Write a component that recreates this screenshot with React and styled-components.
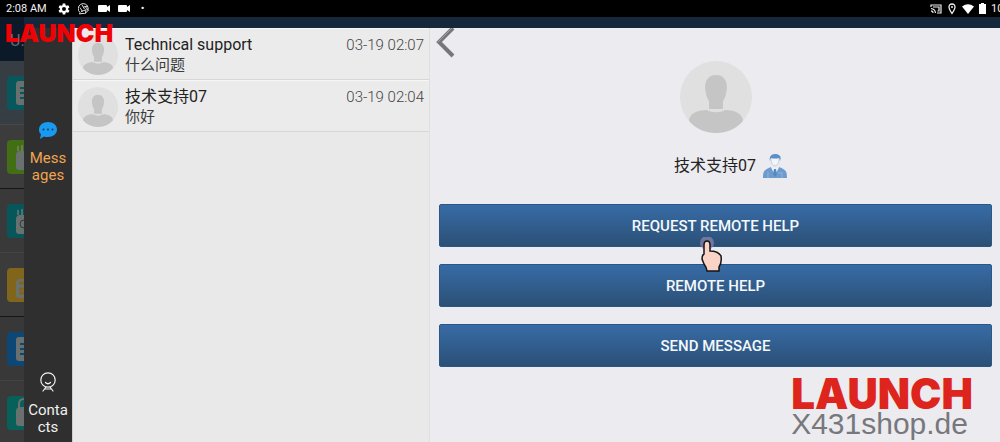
import React from "react";
import styled, { createGlobalStyle } from "styled-components";

const GlobalStyle = createGlobalStyle`
  * {
    box-sizing: border-box;
  }

  body {
    margin: 0;
    background-color: #000;
    font-family: Roboto, "Noto Sans CJK SC", sans-serif;
  }

  button {
    font-family: inherit;
    cursor: pointer;
  }
`;

const Screen = styled.div`
  position: relative;
  display: flex;
  flex-direction: column;
  height: 100vh;
  overflow: hidden;
`;

const StatusBar = styled.header`
  display: flex;
  flex: none;
  align-items: center;
  justify-content: space-between;
  height: 17px;
  padding-left: 6px;
  overflow: hidden;
  background-color: #000;
  color: #f2f2f2;
  font-size: 11px;
  line-height: 16px;
`;

const StatusGroup = styled.div`
  display: flex;
  flex: none;
  align-items: center;
  gap: ${(props) => props.$gap}px;
`;

const Clock = styled.span`
  margin-right: 3px;
`;

const Dot = styled.span`
  margin-left: 3px;
`;

const Battery = styled.span`
  width: 9px;
  white-space: nowrap;
`;

const Body = styled.div`
  display: flex;
  flex: 1;
  min-height: 0;
`;

const Backdrop = styled.aside`
  flex: none;
  width: 24px;
  overflow: hidden;
  background-color: #393b3d;
`;

const BackdropTitle = styled.div`
  height: 44px;
  padding: 14px 0 0 10px;
  background-color: #0c1928;
  color: #626b75;
  font-size: 16px;
  line-height: 20px;
  white-space: nowrap;
`;

const BackdropTile = styled.div`
  display: flex;
  align-items: center;
  height: 64px;
  padding-left: 7px;
  border-bottom: 1px solid ${(props) => props.$line};
  background-color: ${(props) => props.$shade};
`;

const Drawer = styled.div`
  display: grid;
  flex: 1;
  grid-template-columns: 48px minmax(0, 358fr) minmax(0, 570fr);
  min-width: 0;
  border-top: 11px solid #15273a;
`;

const Nav = styled.nav`
  display: flex;
  flex-direction: column;
  justify-content: space-between;
  padding: 93px 0 6px;
  background-color: #2f2f2f;
`;

const NavButton = styled.button`
  display: flex;
  flex-direction: column;
  align-items: center;
  gap: 10px;
  width: 100%;
  padding: 0;
  border: 0;
  background: none;
  color: ${(props) => (props.$active ? "#f0a552" : "#f0f0f0")};
  font-size: 15px;
  line-height: 17px;

  span {
    width: 40px;
    word-break: break-all;
  }
`;

const MessageList = styled.ul`
  margin: 0;
  padding: 0;
  border-left: 1px solid #cfcfcf;
  border-right: 1px solid #dfdfe1;
  background-color: #e9e9e9;
  list-style: none;
`;

const MessageItem = styled.li`
  display: flex;
  gap: 7px;
  height: 52px;
  padding: 6px 5px 0 5px;
  border-top: 1px solid #f6f6f6;
  border-bottom: 1px solid #d6d6d6;
  background-color: #ebebeb;
`;

const MessageText = styled.div`
  flex: 1;
  min-width: 0;
  color: #3c3c3c;

  h2,
  p {
    margin: 0;
    font-weight: 400;
    white-space: nowrap;
  }

  h2 {
    color: #222;
    font-size: 16px;
    line-height: 20px;
  }

  p {
    font-size: 15px;
    line-height: 20px;
  }
`;

const MessageTime = styled.time`
  color: #444;
  font-size: 15px;
  font-weight: 300;
  line-height: 20px;
`;

const Detail = styled.main`
  padding: 0 8px 0 9px;
  background-color: #ecebf0;
`;

const BackButton = styled.button`
  display: block;
  width: 20px;
  height: 33px;
  margin-left: -4px;
  padding: 0;
  border: 0;
  background: none;
`;

const Profile = styled.section`
  display: flex;
  flex-direction: column;
  align-items: center;
`;

const ProfileName = styled.h1`
  display: flex;
  align-items: center;
  gap: 7px;
  margin: 19px 0 24px;
  padding-left: 30px;
  color: #222;
  font-size: 16px;
  font-weight: 400;
  line-height: 28px;
`;

const Actions = styled.div`
  display: flex;
  flex-direction: column;
  gap: 17px;
`;

const ActionButton = styled.button`
  height: 43px;
  border: 1px solid #2c5684;
  border-radius: 2px;
  background: linear-gradient(#376ba6, #2b5076);
  color: #f4f8fb;
  font-size: 15px;
  font-weight: 500;
`;

const Brand = styled.div`
  position: absolute;
  top: 18px;
  left: 5px;
  color: #ee0206;
  font-family: Inter, "Liberation Sans", sans-serif;
  font-size: 25px;
  font-weight: 900;
  line-height: 30px;
`;

const Watermark = styled.div`
  position: absolute;
  right: 27px;
  bottom: 0;
  color: #77787b;
  font-family: "Liberation Sans", sans-serif;
  font-size: 30px;
  line-height: 36px;

  strong {
    display: block;
    color: #dd251d;
    font-family: Inter, "Liberation Sans", sans-serif;
    font-size: 42px;
    font-weight: 900;
    line-height: 24px;
  }
`;

const Pointer = styled.svg`
  position: absolute;
  top: 33px;
  left: 50%;
  margin-left: -18px;
  pointer-events: none;
`;

const PointerAnchor = styled.div`
  position: relative;
  display: grid;
`;

const Avatar = ({ size }) => (
  <svg width={size} height={size} viewBox="0 0 72 72" aria-hidden="true">
    <circle cx="36" cy="36" r="36" fill="#e0e0e0" />
    <path
      d="M36 14c-8 0-11 6-11 13l1 6c1 4 2 5 3 7v8h14v-8c1-2 2-3 3-7l1-6c0-7-3-13-11-13z"
      fill="#c5c5c5"
    />
    <path
      d="M9 60c0-8 10-11 18-11 5 3 13 3 18 0 8 0 18 3 18 11-7 8-16 12-27 12S16 68 9 60z"
      fill="#c5c5c5"
    />
  </svg>
);

const GearIcon = () => (
  <svg width="12" height="12" viewBox="0 0 24 24" fill="#fff">
    <path
      fillRule="evenodd"
      d="M9.500 1h5l.6 3.400 2 1.200 3.300-1.200 2.500 4.300-2.700 2.200v2.200l2.700 2.200-2.500 4.300-3.300-1.200-2 1.200-.6 3.400h-5l-.6-3.400-2-1.200-3.300 1.200-2.500-4.300 2.700-2.200v-2.200L1.100 8.700l2.500-4.300 3.300 1.200 2-1.200zM12 8a4 4 0 1 0 0 8 4 4 0 0 0 0-8z"
    />
  </svg>
);

const ApertureIcon = () => (
  <svg
    width="12"
    height="12"
    viewBox="0 0 24 24"
    fill="none"
    stroke="#ddd"
    strokeWidth="2"
  >
    <path d="M4 19a10 10 0 1 1 4 2l-5 1z" />
    <path d="M8 4l5 8M20 6l-9 2M21 15l-6-7M15 21l1-9M6 17l9-3M4 9l5 8" />
  </svg>
);

const CameraIcon = () => (
  <svg width="12" height="9" viewBox="0 0 12 9" fill="#fff">
    <path d="M1 1h7q1 0 1 1v1l3-2v7L9 6v1q0 1-1 1H1Q0 8 0 7V2q0-1 1-1z" />
  </svg>
);

const CastIcon = () => (
  <svg
    width="12"
    height="10"
    viewBox="0 0 12 10"
    fill="none"
    stroke="#eee"
    strokeWidth="1.200"
  >
    <path d="M1 3V1h10v8H7M1 4.500a5 5 0 0 1 4.500 4.500M1 6.800A2.500 2.500 0 0 1 3.200 9M3 3h6v4H7.500" />
  </svg>
);

const PinIcon = () => (
  <svg width="10" height="12" viewBox="0 0 10 12">
    <path
      d="M5 1C3 1 2 2.500 2 4c0 2 3 6.500 3 6.500S8 6 8 4c0-1.500-1-3-3-3z"
      fill="none"
      stroke="#eee"
      strokeWidth="1.300"
    />
    <circle cx="5" cy="4" r="1" fill="#eee" />
  </svg>
);

const WifiIcon = () => (
  <svg width="12" height="10" viewBox="0 0 12 10" fill="#fff">
    <path d="M0 2.500Q6-2 12 2.500L6 10z" />
  </svg>
);

const BatteryIcon = () => (
  <svg width="7" height="11" viewBox="0 0 7 11" fill="#fff">
    <path d="M2 0h3v1h2v10H0V1h2z" />
  </svg>
);

const ChatIcon = () => (
  <svg width="20" height="19" viewBox="0 0 20 19">
    <path
      d="M10 1c5 0 9 3 9 7.500S15 16 10 16c-2 0-3 0-4-.5L2 18l1-5C1.500 12 1 10.500 1 8.500 1 4 5 1 10 1z"
      fill="#189af0"
    />
    <g fill="#1b3a55">
      <circle cx="5.500" cy="8.500" r="1" />
      <circle cx="10" cy="8.500" r="1" />
      <circle cx="14.500" cy="8.500" r="1" />
    </g>
  </svg>
);

const ContactIcon = () => (
  <svg
    width="18"
    height="20"
    viewBox="0 0 18 20"
    fill="none"
    stroke="#f2f2f2"
    strokeWidth="1.200"
    strokeLinecap="round"
  >
    <circle cx="9" cy="8" r="7.200" />
    <path d="M6.500 10.500q2.500 2.500 5 0M7 15l-3 4M11 15l3 4M5.500 17h7" />
  </svg>
);

const AgentIcon = () => (
  <svg width="24" height="24" viewBox="0 0 24 24">
    <path
      d="M7 7c-1-4 1-7 5-7s7 2 5 7l-1-3q-4 1-8 0z"
      fill="#5b8fc6"
    />
    <path d="M8 5q0 6 4 7 4-1 4-7" fill="#f3f5f9" stroke="#c3d2e5" />
    <path d="M0 24c0-7 1-8 8-11l4 8 4-8c7 3 8 4 8 11z" fill="#6d9bce" />
    <path d="M8 13l4 8 4-8-4 2z" fill="#eef3fa" />
    <path d="M11 15h2l1 5-2 3-2-3z" fill="#5688bf" />
    <path d="M5 18v6M19 18v6M15 19h4" stroke="#8fb3da" />
  </svg>
);

const ChevronIcon = () => (
  <svg width="20" height="32" viewBox="0 0 20 32" fill="none">
    <path d="M18 0L4 14l14 14" stroke="#77777a" strokeWidth="4" />
    <path d="M17 0L3 14" stroke="#a0a0a3" />
  </svg>
);

const TileIcon = ({ color, kind }) => (
  <svg width="17" height="38" viewBox="0 0 17 38">
    <path d="M4 2h13v34H4q-4 0-4-4V6q0-4 4-4z" fill={color} />
    <path
      d={
        kind === "page"
          ? "M17 7h-5q-3 0-3 3v18q0 3 3 3h5z"
          : "M17 13h-5q-3 1-3 4v12q0 3 3 3h5z"
      }
      fill="#68716f"
    />
    {kind === "page" && (
      <path d="M13 14h4M13 19h4M13 24h4" stroke={color} strokeWidth="2" />
    )}
    {kind === "robot" && (
      <path d="M12 17h5M12 23h5M12 27h5" stroke={color} strokeWidth="3" />
    )}
    {kind === "search" && (
      <circle cx="17" cy="22" r="4" fill="none" stroke="#263c3c" />
    )}
    {(kind === "jar" || kind === "search") && (
      <path d="M11 8v5M15 7v6" stroke="#8a9292" />
    )}
    {kind === "lock" && (
      <path d="M12 15V10q0-5 5-5" fill="none" stroke="#68716f" strokeWidth="2" />
    )}
  </svg>
);

const tiles = [
  { color: "#07575d", kind: "page", shade: "#363d43", line: "#45494c" },
  { color: "#426f13", kind: "jar", shade: "#3c3c3c", line: "#151515" },
  { color: "#07565a", kind: "search", shade: "#393939", line: "#444" },
  { color: "#81651a", kind: "robot", shade: "#3b3b3b", line: "#151515" },
  { color: "#0d4775", kind: "page", shade: "#383838", line: "#434343" },
  { color: "#07605a", kind: "lock", shade: "#3a3a3a", line: "#3a3a3a" },
];

const messages = [
  { name: "Technical support", text: "什么问题", time: "03-19 02:07" },
  { name: "技术支持07", text: "你好", time: "03-19 02:04" },
];

const App = () => {
  return (
    <Screen>
      <GlobalStyle />
      <StatusBar>
        <StatusGroup $gap={8}>
          <Clock>2:08 AM</Clock>
          <GearIcon />
          <ApertureIcon />
          <CameraIcon />
          <CameraIcon />
          <Dot>•</Dot>
        </StatusGroup>
        <StatusGroup $gap={5}>
          <CastIcon />
          <PinIcon />
          <WifiIcon />
          <BatteryIcon />
          <Battery>10</Battery>
        </StatusGroup>
      </StatusBar>
      <Body>
        <Backdrop>
          <BackdropTitle>U.</BackdropTitle>
          {tiles.map((tile, index) => (
            <BackdropTile key={index} $shade={tile.shade} $line={tile.line}>
              <TileIcon color={tile.color} kind={tile.kind} />
            </BackdropTile>
          ))}
        </Backdrop>
        <Drawer>
          <Nav>
            <NavButton $active>
              <ChatIcon />
              <span>Mess ages</span>
            </NavButton>
            <NavButton>
              <ContactIcon />
              <span>Conta cts</span>
            </NavButton>
          </Nav>
          <MessageList>
            {messages.map((message) => (
              <MessageItem key={message.name}>
                <Avatar size={40} />
                <MessageText>
                  <h2>{message.name}</h2>
                  <p>{message.text}</p>
                </MessageText>
                <MessageTime>{message.time}</MessageTime>
              </MessageItem>
            ))}
          </MessageList>
          <Detail>
            <BackButton aria-label="Back">
              <ChevronIcon />
            </BackButton>
            <Profile>
              <Avatar size={72} />
              <ProfileName>
                技术支持07
                <AgentIcon />
              </ProfileName>
            </Profile>
            <Actions>
              <PointerAnchor>
                <ActionButton>REQUEST REMOTE HELP</ActionButton>
                <Pointer width="26" height="36" viewBox="0 0 26 36">
                  <circle cx="9" cy="6" r="7" fill="#8d86b0" opacity="0.7" />
                  <path
                    d="M6 8q0-4 3-4t3 4v6q8 0 11 5 1 7-2 11v4H9q0-3-3-7l-2-5q0-4 2-5z"
                    fill="#f9d3c6"
                    stroke="#151515"
                    strokeWidth="1.500"
                  />
                </Pointer>
              </PointerAnchor>
              <ActionButton>REMOTE HELP</ActionButton>
              <ActionButton>SEND MESSAGE</ActionButton>
            </Actions>
          </Detail>
        </Drawer>
      </Body>
      <Brand>LAUNCH</Brand>
      <Watermark>
        <strong>LAUNCH</strong>
        X431shop.de
      </Watermark>
    </Screen>
  );
};

export default App;
